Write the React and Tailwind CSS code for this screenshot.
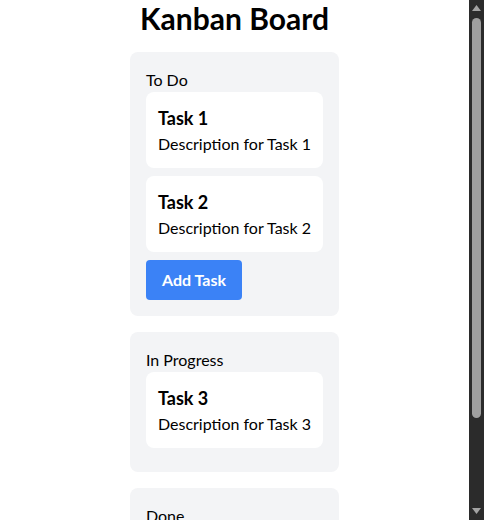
import React, { useState } from 'react';

const initialColumns = [
  {
    id: 'todo',
    title: 'To Do',
    tasks: [
      { id: 1, title: 'Task 1', description: 'Description for Task 1' },
      { id: 2, title: 'Task 2', description: 'Description for Task 2' },
    ],
  },
  {
    id: 'progress',
    title: 'In Progress',
    tasks: [{ id: 3, title: 'Task 3', description: 'Description for Task 3' }],
  },
  {
    id: 'done',
    title: 'Done',
    tasks: [{ id: 4, title: 'Task 4', description: 'Description for Task 4' }],
  },
];

// the page in the reference shows a classic scrollbar, drawn here by hand
function Scrollbar() {
  return (
    <div className="w-[15px] shrink-0 bg-[#2b2b2b] flex flex-col items-center py-[3px]">
      <svg width="9" height="6" viewBox="0 0 9 6" className="mt-[2px]">
        <path d="M4.5 0L9 6H0z" fill="#a3a3a3" />
      </svg>
      <div className="w-[9px] h-[400px] mt-[7px] rounded-full bg-[#9f9f9f]" />
      <div className="flex-1" />
      <svg width="9" height="6" viewBox="0 0 9 6" className="mb-[3px]">
        <path d="M0 0H9L4.5 6z" fill="#a3a3a3" />
      </svg>
    </div>
  );
}

export default function App() {
  const [columns, setColumns] = useState(initialColumns);

  const addTask = () => {
    const next = columns.reduce((n, c) => n + c.tasks.length, 0) + 1;
    setColumns(columns.map((c) =>
      c.id === 'todo'
        ? { ...c, tasks: [...c.tasks, { id: Date.now(), title: `Task ${next}`, description: `Description for Task ${next}` }] }
        : c
    ));
  };

  return (
    <div className="flex h-[520px] overflow-hidden font-['Lato',sans-serif] text-black">
      <div className="flex-1 flex flex-col items-center overflow-hidden">
        <h1 className="text-3xl font-bold mb-4">Kanban Board</h1>
        <div className="flex flex-col gap-4">
          {columns.map((col) => (
            <div key={col.id} className="bg-[#f3f4f6] rounded-lg p-4">
              <h2 className="text-base">{col.title}</h2>
              {col.tasks.map((task) => (
                <div key={task.id} className="bg-white rounded-lg p-3 mb-2">
                  <h3 className="text-lg font-bold">{task.title}</h3>
                  <p>{task.description}</p>
                </div>
              ))}
              {col.id === 'todo' && (
                <button onClick={addTask} className="bg-[#3b82f6] text-white font-bold px-4 py-2 rounded">
                  Add Task
                </button>
              )}
            </div>
          ))}
        </div>
      </div>
      <Scrollbar />
    </div>
  );
}
